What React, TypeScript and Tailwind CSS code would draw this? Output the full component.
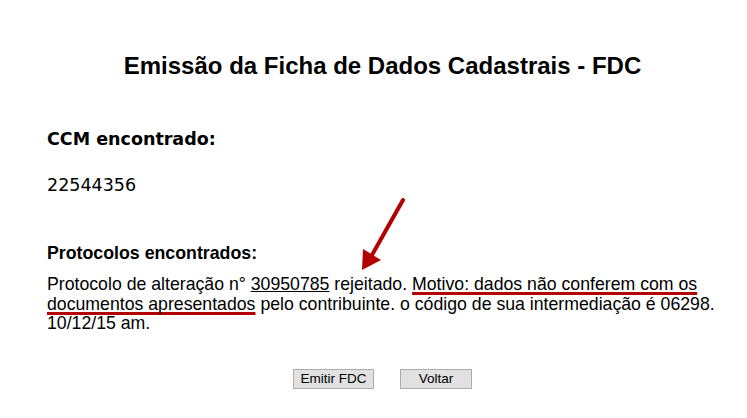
import React from 'react'

const sans = { fontFamily: '"Liberation Sans", Arial, sans-serif' }
const dejavu = { fontFamily: '"DejaVu Sans", Verdana, sans-serif' }

function Arrow() {
  return (
    <svg
      className="absolute left-[355px] top-[195px]"
      width="60"
      height="80"
      viewBox="355 195 60 80"
    >
      <line x1="403" y1="200" x2="372" y2="255" stroke="#b30000" strokeWidth="4" strokeLinecap="round" />
      <polygon points="362,270 363,249 381,260" fill="#b30000" />
    </svg>
  )
}

export default function App() {
  return (
    <div className="relative w-[747px] h-[418px] bg-white text-black overflow-hidden" style={sans}>
      <div className="pl-[47px] pr-[29px]">
        {/* Title */}
        <h1 className="pt-[52px] text-center text-[24px] font-bold leading-[27px]">
          Emissão da Ficha de Dados Cadastrais - FDC
        </h1>

        {/* CCM */}
        <h2 className="mt-[50px] text-[17.5px] font-bold leading-[20px]" style={dejavu}>
          CCM encontrado:
        </h2>
        <p className="mt-[26px] text-[17.5px] leading-[20px]" style={dejavu}>
          22544356
        </p>

        {/* Protocolos */}
        <h3 className="mt-[48px] text-[17.75px] font-bold leading-[20px]">Protocolos encontrados:</h3>
        <p className="mt-[12px] text-[17.7px] leading-[19.5px]">
          Protocolo de alteração n° <span className="underline">30950785</span> rejeitado.{' '}
          <span className="underline decoration-[#b30000] decoration-[3px] underline-offset-[2px] [text-decoration-skip-ink:none]">
            Motivo: dados não conferem com os documentos apresentados
          </span>{' '}
          pelo contribuinte. o código de sua intermediação é 06298. 10/12/15 am.
        </p>

        {/* Buttons */}
        <div className="mt-[35px] flex justify-center gap-[26px]">
          <button className="w-[81px] h-[20px] border border-[#adadad] bg-[#e1e1e1] text-[13.5px] leading-none">
            Emitir FDC
          </button>
          <button className="w-[72px] h-[20px] border border-[#adadad] bg-[#e1e1e1] text-[13.5px] leading-none">
            Voltar
          </button>
        </div>
      </div>
      <Arrow />
    </div>
  )
}
